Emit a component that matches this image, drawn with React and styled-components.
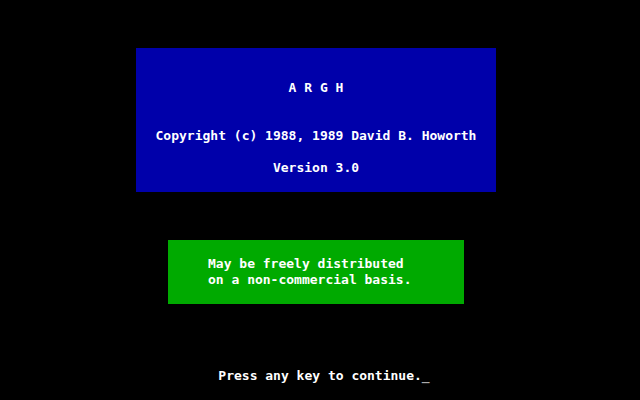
import React from "react";
import styled, { createGlobalStyle } from "styled-components";

const App = () => {
    return (
        <>
            <GlobalStyle />
            <Screen>
                <TitleBox>
                    <Title>A R G H</Title>
                    <Copyright>Copyright (c) 1988, 1989 David B. Howorth</Copyright>
                    <Line>Version 3.0</Line>
                </TitleBox>
                <NoticeBox>
                    <Line>May be freely distributed</Line>
                    <Line>on a non-commercial basis.</Line>
                </NoticeBox>
                <Prompt>
                    Press any key to continue.<Cursor>_</Cursor>
                </Prompt>
            </Screen>
        </>
    );
};

export default App;

const GlobalStyle = createGlobalStyle`
    * {
        box-sizing: border-box;
    }
    body {
        margin: 0;
        background: #000000;
    }
`;

//80 x 25 text mode, one cell = 8 x 16
const Screen = styled.main`
    min-height: 100vh;
    padding: 48px 8px 16px 0;
    display: flex;
    flex-direction: column;
    align-items: center;
    color: #ffffff;
    font-family: "DejaVu Sans Mono", "Liberation Mono", monospace;
    font-size: 13px;
    font-weight: bold;
    line-height: 16px;
    white-space: pre;
`;

const TitleBox = styled.header`
    width: 100%;
    max-width: 360px;
    padding: 32px 16px 16px;
    background: #0000aa;
    text-align: center;
`;

const Title = styled.h1`
    margin: 0;
    font-size: 13px;
    line-height: 16px;
`;

const Line = styled.p`
    margin: 0;
`;

const Copyright = styled(Line)`
    margin: 32px 0 16px;
`;

const NoticeBox = styled.section`
    width: 100%;
    max-width: 296px;
    margin-top: 48px;
    padding: 16px 40px;
    background: #00aa00;
`;

const Prompt = styled.p`
    margin: auto 0 0;
    padding-left: 16px;
`;

const Cursor = styled.span`
    color: #aaaaaa;
`;
